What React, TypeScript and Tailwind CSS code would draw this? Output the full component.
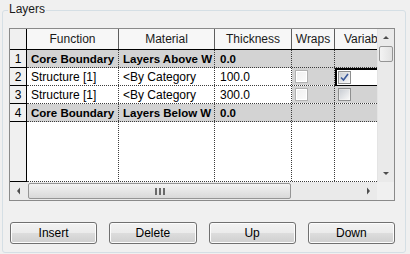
import React from 'react';

type Row = {
  n: number;
  fn: string;
  mat: string;
  thick: string;
  core?: boolean;
  wraps?: boolean;
  variable?: boolean;
  selected?: boolean;
};

// visible (clipped) texts as the grid shows them
const rows: Row[] = [
  { n: 1, fn: 'Core Boundary', mat: 'Layers Above W', thick: '0.0', core: true },
  { n: 2, fn: 'Structure [1]', mat: '<By Category', thick: '100.0', wraps: false, variable: true, selected: true },
  { n: 3, fn: 'Structure [1]', mat: '<By Category', thick: '300.0', wraps: false, variable: false },
  { n: 4, fn: 'Core Boundary', mat: 'Layers Below W', thick: '0.0', core: true },
];

function CheckBox({ checked, disabled }: { checked?: boolean; disabled?: boolean }) {
  return (
    <div
      className={
        'w-[13px] h-[13px] border flex items-center justify-center ' +
        (disabled ? 'border-[#b1b1b1] bg-white' : 'border-[#8e8f8f] bg-[linear-gradient(135deg,#dcdcdc,#fbfbfb)]')
      }
    >
      <div
        className={
          'w-[9px] h-[9px] flex items-center justify-center ' +
          (disabled ? 'bg-[linear-gradient(135deg,#f0f0f0,#fafafa)]' : 'bg-[linear-gradient(135deg,#cbcfd5,#f6f6f6)]')
        }
      >
        {checked && (
          <svg width="9" height="9" viewBox="0 0 9 9">
            <path d="M1 4.5 L3.5 7 L8 1" fill="none" stroke="#3b5a9a" strokeWidth="1.6" />
          </svg>
        )}
      </div>
    </div>
  );
}

function Arrow({ dir }: { dir: 'up' | 'down' | 'left' | 'right' }) {
  const d = {
    up: 'M1 5 L4 2 L7 5 Z',
    down: 'M1 2 L4 5 L7 2 Z',
    left: 'M5 0.5 L2 4 L5 7.5 Z',
    right: 'M3 0.5 L6 4 L3 7.5 Z',
  }[dir];
  return (
    <svg width="8" height="8" viewBox="0 0 8 8">
      <path d={d} fill="#4d4d4d" />
    </svg>
  );
}

const cellBase = 'h-full shrink-0 border-r border-dotted border-[#3c3c3c] whitespace-nowrap overflow-hidden flex items-center';

function HeaderRow() {
  const h = 'h-full shrink-0 border-r border-[#5e5e5e] flex items-center justify-center whitespace-nowrap overflow-hidden';
  return (
    <div className="flex h-[21px] shrink-0 border-b border-black bg-[#f7f7f7] text-[#1a1a1a]">
      <div className="w-[17px] h-full shrink-0 border-r border-black bg-[#f0f0f0]" />
      <div className={h + ' w-[92px]'}>Function</div>
      <div className={h + ' w-[96px]'}>Material</div>
      <div className={h + ' w-[77px]'}>Thickness</div>
      <div className={h + ' w-[43px]'}>Wraps</div>
      <div className="h-full flex-1 pl-[9px] flex items-center whitespace-nowrap">Variab</div>
    </div>
  );
}

function DataRow({ r }: { r: Row }) {
  const bg = r.core ? 'bg-[#d3d3d3] font-bold text-[11.5px]' : 'bg-white';
  return (
    <div className="flex h-[18px] shrink-0">
      <div className="w-[17px] h-full shrink-0 border-r border-b border-black bg-[#f0f0f0] flex items-center justify-center">
        {r.n}
      </div>
      <div className={'flex flex-1 border-b border-dotted border-[#3c3c3c] ' + bg}>
        <div className={cellBase + ' w-[92px] pl-[4px]'}>{r.fn}</div>
        <div className={cellBase + ' w-[96px] pl-[4px]'}>{r.mat}</div>
        <div className={cellBase + ' w-[77px] pl-[5px]'}>{r.thick}</div>
        <div className={cellBase + ' w-[43px] pl-[3px] ' + (r.core ? '' : 'bg-[#d3d3d3]')}>
          {!r.core && <CheckBox checked={r.wraps} disabled />}
        </div>
        {r.selected ? (
          <div className="h-[19px] w-[50px] shrink-0 -mb-[1px] border-2 border-black bg-white flex items-center pl-[1px]">
            <CheckBox checked={r.variable} />
          </div>
        ) : (
          <div className={'h-full w-[50px] shrink-0 flex items-center pl-[3px] ' + (r.core ? '' : 'bg-[#d3d3d3]')}>
            {!r.core && <CheckBox checked={r.variable} />}
          </div>
        )}
      </div>
    </div>
  );
}

function FillerRow() {
  const c = 'h-full shrink-0 border-r border-dotted border-[#3c3c3c]';
  return (
    <div className="flex flex-1">
      <div className="w-[17px] h-full shrink-0 border-r border-b border-black bg-[#f0f0f0]" />
      <div className="flex flex-1 border-b border-dotted border-[#3c3c3c] bg-white">
        <div className={c + ' w-[92px]'} />
        <div className={c + ' w-[96px]'} />
        <div className={c + ' w-[77px]'} />
        <div className={c + ' w-[43px]'} />
      </div>
    </div>
  );
}

function Button({ label }: { label: string }) {
  return (
    <button className="h-[22px] rounded-[3px] border border-[#707070] bg-[linear-gradient(#f2f2f2_0%,#ebebeb_50%,#dddddd_50%,#cfcfcf_100%)] shadow-[inset_0_0_0_1px_#fcfcfc] text-[12px] text-black">
      {label}
    </button>
  );
}

export default function App() {
  return (
    <div className="w-[410px] h-[254px] bg-[#f0f0f0] pt-[10px] pl-[2px] font-['Liberation_Sans',Arial,sans-serif] text-[12px] leading-[14px] text-black">
      <div className="relative w-[404px] h-[243px] rounded-[3px] border border-[#d5dfe5] pt-[17px] pl-[6px]">
        <span className="absolute left-[5px] top-[-9px] px-[1px] bg-[#f0f0f0] text-[#1a1a1a]">Layers</span>

        <div className="w-[386px] h-[173px] border border-[#8a8a8a] flex flex-col">
          <div className="flex h-[153px]">
            <div className="flex-1 flex flex-col overflow-hidden">
              <HeaderRow />
              {rows.map((r) => (
                <DataRow key={r.n} r={r} />
              ))}
              <FillerRow />
            </div>
            <div className="w-[17px] shrink-0 flex flex-col bg-[#eaeaea] border-l border-[#e4e4e4]">
              <div className="h-[17px] flex items-center justify-center">
                <Arrow dir="up" />
              </div>
              <div className="h-[16px] mx-[1px] rounded-[2px] border border-[#959595] bg-[linear-gradient(90deg,#f3f3f3,#e2e2e2)]" />
              <div className="flex-1" />
              <div className="h-[17px] flex items-center justify-center">
                <Arrow dir="down" />
              </div>
            </div>
          </div>
          <div className="flex h-[18px]">
            <div className="flex-1 flex items-center bg-[#eaeaea]">
              <div className="w-[18px] h-full flex items-center justify-center">
                <Arrow dir="left" />
              </div>
              <div className="w-[263px] h-[16px] rounded-[2px] border border-[#959595] bg-[linear-gradient(#f3f3f3,#d9d9d9)] flex items-center justify-center">
                <div className="flex gap-[2px]">
                  <div className="w-[2px] h-[7px] bg-[#6a6a6a]" />
                  <div className="w-[2px] h-[7px] bg-[#6a6a6a]" />
                  <div className="w-[2px] h-[7px] bg-[#6a6a6a]" />
                </div>
              </div>
              <div className="flex-1" />
              <div className="w-[18px] h-full flex items-center justify-center">
                <Arrow dir="right" />
              </div>
            </div>
            <div className="w-[17px] shrink-0 bg-[#f0f0f0]" />
          </div>
        </div>

        <div className="grid grid-cols-4 gap-[12px] w-[386px] mt-[21px] pl-[1px]">
          <Button label="Insert" />
          <Button label="Delete" />
          <Button label="Up" />
          <Button label="Down" />
        </div>
      </div>
    </div>
  );
}
